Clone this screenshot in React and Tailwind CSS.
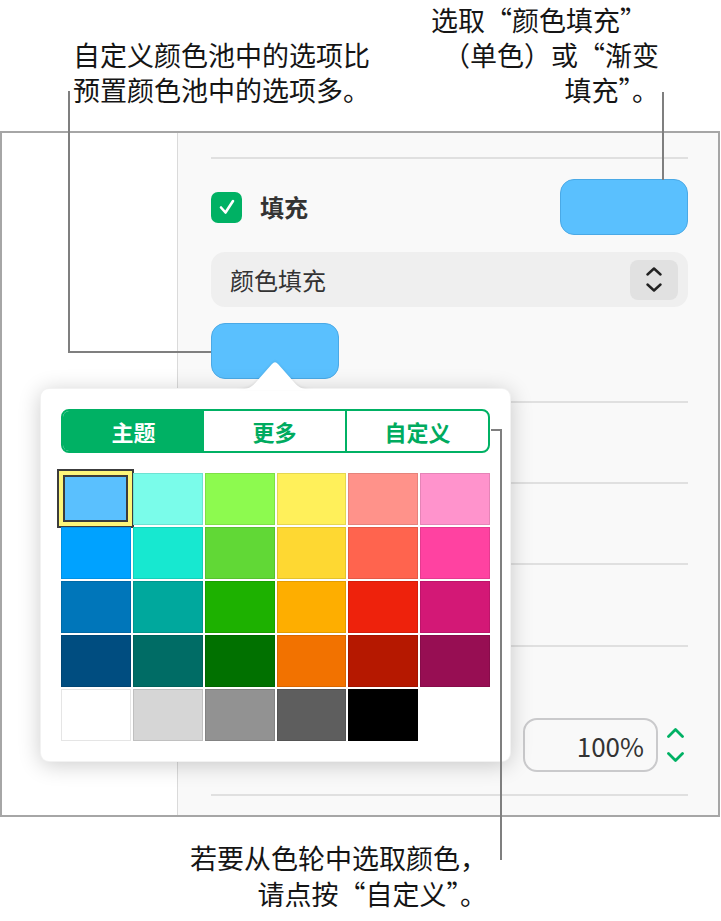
import React from "react";

const rows = [
  ["#5ac0fe", "#7afcea", "#8dfa4f", "#fff05a", "#ff928a", "#ff93cc"],
  ["#00a2ff", "#17e8d0", "#61d836", "#fed832", "#ff644e", "#ff42a1"],
  ["#0076ba", "#00a89d", "#1db100", "#feae00", "#ee220c", "#d31876"],
  ["#004d80", "#006c65", "#017100", "#f27200", "#b51800", "#970e53"],
  ["#ffffff", "#d6d6d6", "#929292", "#5e5e5e", "#000000"],
];

function Sep({ className = "" }) {
  return <div className={`h-[2px] bg-[#e0e0e0] ${className}`} />;
}

export default function App() {
  return (
    <div className="relative w-[721px] h-[921px] bg-white overflow-hidden font-['Noto_Sans_CJK_SC','Noto_Sans',sans-serif]">
      {/* callout texts top */}
      <div className="h-[131px] flex justify-between items-end pb-[24px] pl-[73px] pr-[62px] text-[27px] leading-[35px] text-[#151515]">
        <div>
          <div>自定义颜色池中的选项比</div>
          <div>预置颜色池中的选项多。</div>
        </div>
        <div className="text-right">
          <div className="pr-[12px]">选取“颜色填充”</div>
          <div>（单色）或“渐变</div>
          <div>填充”。</div>
        </div>
      </div>

      {/* inspector panel */}
      <div className="w-[720px] h-[686px] border-2 border-[#a6a6a6] flex">
        <div className="w-[176px] bg-white border-r border-[#dadada]" />
        <div className="flex-1 bg-[#f9f9f9] pl-[33px] pr-[30px] pt-[24px]">
          <Sep />
          <div className="mt-[20px] h-[56px] flex items-center justify-between">
            <div className="flex items-center gap-[18px]">
              <div className="w-[31px] h-[31px] rounded-[7px] bg-[#00b164] flex items-center justify-center">
                <svg width="18" height="18" viewBox="0 0 18 18" fill="none">
                  <path d="M3 9.5 L7.5 14.5 L15 3" stroke="white" strokeWidth="2.6" strokeLinecap="round" strokeLinejoin="round" />
                </svg>
              </div>
              <span className="text-[24px] font-semibold text-[#333]">填充</span>
            </div>
            <div className="w-[128px] h-[56px] rounded-[14px] bg-[#5ac0fe] border border-[#4aa9e6]" />
          </div>
          <div className="mt-[17px] h-[55px] rounded-[14px] bg-[#efefef] flex items-center justify-between pl-[19px] pr-[10px]">
            <span className="text-[24px] text-[#333]">颜色填充</span>
            <div className="w-[48px] h-[40px] rounded-[8px] bg-[#e1e1e1] flex flex-col items-center justify-center gap-[7px]">
              <svg width="16" height="9" viewBox="0 0 16 9" fill="none">
                <path d="M1.5 7.5 L8 1.5 L14.5 7.5" stroke="#222" strokeWidth="2.4" strokeLinecap="round" strokeLinejoin="round" />
              </svg>
              <svg width="16" height="9" viewBox="0 0 16 9" fill="none">
                <path d="M1.5 1.5 L8 7.5 L14.5 1.5" stroke="#222" strokeWidth="2.4" strokeLinecap="round" strokeLinejoin="round" />
              </svg>
            </div>
          </div>
          <div className="mt-[16px] w-[128px] h-[56px] rounded-[14px] bg-[#5ac0fe] border border-[#4aa9e6]" />
          <Sep className="mt-[22px]" />
          <Sep className="mt-[79px]" />
          <Sep className="mt-[79px]" />
          <Sep className="mt-[80px]" />
          <div className="mt-[71px] h-[54px] flex items-center justify-end pr-[4px]">
            <div className="w-[135px] h-[54px] rounded-[14px] border-2 border-[#cacacc] flex items-center justify-end pr-[12px] text-[26px] text-[#333]">
              100%
            </div>
            <div className="ml-[9px] flex flex-col items-center gap-[14px]">
              <svg width="17" height="10" viewBox="0 0 17 10" fill="none">
                <path d="M1.5 8.5 L8.5 1.5 L15.5 8.5" stroke="#00b164" strokeWidth="2.8" strokeLinecap="round" strokeLinejoin="round" />
              </svg>
              <svg width="17" height="10" viewBox="0 0 17 10" fill="none">
                <path d="M1.5 1.5 L8.5 8.5 L15.5 1.5" stroke="#00b164" strokeWidth="2.8" strokeLinecap="round" strokeLinejoin="round" />
              </svg>
            </div>
          </div>
          <Sep className="mt-[22px]" />
        </div>
      </div>

      {/* callout text bottom */}
      <div className="mt-[23px] pr-[234px] text-right text-[27px] leading-[36px] text-[#151515]">
        <div>若要从色轮中选取颜色，</div>
        <div>请点按“自定义”。</div>
      </div>

      {/* colour popover */}
      <div className="absolute left-[40px] top-[388px] w-[471px] p-[20px] bg-white rounded-[9px] border border-black/5 shadow-[0_3px_22px_rgba(0,0,0,0.2)]">
        <div className="flex h-[44px] rounded-[8px] border-2 border-[#00b164] overflow-hidden text-[22px] font-semibold">
          <div className="flex-1 bg-[#00b164] text-white flex items-center justify-center">主题</div>
          <div className="flex-1 text-[#00ab5f] flex items-center justify-center border-r-2 border-[#00b164]">更多</div>
          <div className="flex-1 text-[#00ab5f] flex items-center justify-center">自定义</div>
        </div>
        <div className="mt-[20px] grid grid-cols-6 gap-[2px]">
          {rows.flatMap((row, r) =>
            row.map((c, i) => (
              <div key={`${r}-${i}`} className="relative h-[52px]">
                <div className="h-full border border-black/10" style={{ backgroundColor: c }} />
                {r === 0 && i === 0 && (
                  <div className="absolute -left-[4px] -top-[4px] -right-[3px] -bottom-[3px] border-2 border-[#3c3c3c] bg-[#fdf67a] p-[4px]">
                    <div className="h-full border-2 border-[#3c3c3c] bg-[#5ac0fe]" />
                  </div>
                )}
              </div>
            ))
          )}
        </div>
      </div>
      <svg className="absolute left-[235px] top-[361px] drop-shadow-[0_-1px_1px_rgba(0,0,0,0.08)]" width="80" height="29" viewBox="0 0 80 29" fill="none">
        <path d="M0 29 C14 29 18 25 22 20 L37 3 Q40 -0.5 43 3 L58 20 C62 25 66 29 80 29 Z" fill="white" />
      </svg>

      {/* leader lines */}
      <div className="absolute left-[68px] top-[91px] w-[2px] h-[262px] bg-[#7f7f7f]" />
      <div className="absolute left-[68px] top-[351px] w-[143px] h-[2px] bg-[#7f7f7f]" />
      <div className="absolute left-[662px] top-[92px] w-[2px] h-[88px] bg-[#7f7f7f]" />
      <div className="absolute left-[491px] top-[429px] w-[11px] h-[2px] bg-[#7f7f7f]" />
      <div className="absolute left-[500px] top-[429px] w-[2px] h-[431px] bg-[#7f7f7f]" />
    </div>
  );
}
